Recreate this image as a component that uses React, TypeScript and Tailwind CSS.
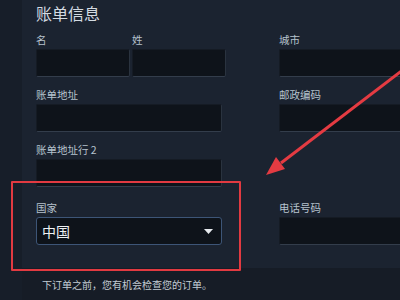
const font = { fontFamily: '"Noto Sans CJK SC", "Noto Sans", sans-serif' };

function Label({ text }: { text: string }) {
    return <div className="h-[16px] text-[10.5px] leading-[16px] text-[#b6c2cd] whitespace-nowrap">{text}</div>;
}

function Input({ className = 'w-[186px]' }: { className?: string }) {
    return (
        <div className={`${className} mt-[1px] h-[28px] rounded-[2px] bg-[#0e131a] border border-[#151b24] border-b-[#333d4b] border-r-[#2a333f]`} />
    );
}

export default function App() {
    return (
        <div className="relative w-[400px] h-[300px] overflow-hidden flex bg-[#1b2330]" style={font}>
            <div className="w-[22px] shrink-0 h-full bg-[#171e29]" />

            <div className="flex-1 min-w-0 flex flex-col">
                <div className="h-[268px] pl-[14px] bg-[#1b2330]">
                    <div className="h-[32px] pt-[2px] text-[16px] leading-[22px] text-[#d4dbe2]">账单信息</div>

                    {/* row 1 */}
                    <div className="flex">
                        <div className="w-[243px] shrink-0 flex gap-[2px]">
                            <div>
                                <Label text="名" />
                                <Input className="w-[94px]" />
                            </div>
                            <div>
                                <Label text="姓" />
                                <Input className="w-[94px]" />
                            </div>
                        </div>
                        <div>
                            <Label text="城市" />
                            <Input className="w-[140px]" />
                        </div>
                    </div>

                    {/* row 2 */}
                    <div className="flex mt-[10px]">
                        <div className="w-[243px] shrink-0">
                            <Label text="账单地址" />
                            <Input />
                        </div>
                        <div>
                            <Label text="邮政编码" />
                            <Input className="w-[140px]" />
                        </div>
                    </div>

                    {/* row 3 */}
                    <div className="flex mt-[10px]">
                        <div className="w-[243px] shrink-0">
                            <Label text="账单地址行 2" />
                            <Input />
                        </div>
                    </div>

                    {/* row 4 */}
                    <div className="flex mt-[13px]">
                        <div className="w-[243px] shrink-0">
                            <Label text="国家" />
                            <div className="w-[186px] mt-[1px] h-[28px] rounded-[3px] bg-[#0e131a] border border-[#3d5577] flex items-center justify-between pl-[5px] pr-[8px]">
                                <span className="text-[14px] leading-none text-[#eef1f4]">中国</span>
                                <svg width="9" height="5" viewBox="0 0 9 5">
                                    <polygon points="0,0 9,0 4.5,5" fill="#e6eaee" />
                                </svg>
                            </div>
                        </div>
                        <div>
                            <Label text="电话号码" />
                            <Input className="w-[140px]" />
                        </div>
                    </div>
                </div>

                <div className="flex-1 bg-[#161c26] pl-[20px] pt-[10px]">
                    <p className="text-[10px] leading-[14px] text-[#c3ccd4] whitespace-nowrap">下订单之前，您有机会检查您的订单。</p>
                </div>
            </div>

            {/* annotation box */}
            <div className="absolute left-[11px] top-[181px] w-[230px] h-[90px] border-2 border-[#e23a41] rounded-[1px] pointer-events-none" />

            {/* annotation arrow */}
            <svg className="absolute inset-0 pointer-events-none" width="400" height="300" viewBox="0 0 400 300">
                <line x1="404" y1="69" x2="281" y2="163" stroke="#e43b42" strokeWidth="3" />
                <polygon points="266,175 285,169 276,157" fill="#e43b42" />
            </svg>
        </div>
    );
}
